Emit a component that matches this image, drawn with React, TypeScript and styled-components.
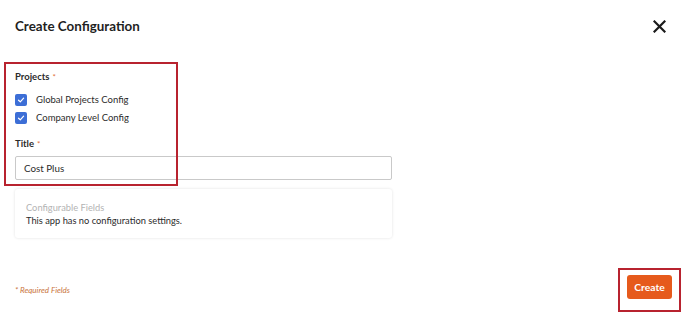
import React from 'react';
import styled, { createGlobalStyle } from 'styled-components';

const Global = createGlobalStyle`
  html, body { margin: 0; padding: 0; background: #fff; }
  body { font-family: Lato, "Open Sans", sans-serif; color: #2b2b2b; }
  * { box-sizing: border-box; }
`;

const Dialog = styled.div`
  position: relative;
  width: 688px;
  height: 319px;
  padding: 0 15px;
  display: flex;
  flex-direction: column;
`;

const Header = styled.header`
  height: 52px;
  display: flex;
  align-items: center;
  justify-content: space-between;
`;

const Heading = styled.h2`
  margin: 0;
  font-size: 13.4px;
  font-weight: 700;
  color: #1f1f1f;
`;

const CloseButton = styled.button`
  border: 0;
  background: none;
  padding: 0;
  margin-right: 7px;
  width: 13px;
  height: 13px;
  display: flex;
  cursor: pointer;
`;

const Form = styled.div`
  width: 377px;
  display: flex;
  flex-direction: column;
  padding-top: 18px;
`;

const Label = styled.div`
  font-size: 9.5px;
  font-weight: 700;
  color: #2b2b2b;
  line-height: 14px;
  span { color: #e2703a; font-weight: 400; margin-left: 3px; font-size: 8px; }
`;

const CheckList = styled.div`
  display: flex;
  flex-direction: column;
  gap: 6px;
  margin: 10px 0 13px;
`;

const CheckRow = styled.label`
  display: flex;
  align-items: center;
  gap: 9px;
  font-size: 9.5px;
  color: #2b2b2b;
  line-height: 12px;
`;

const Box = styled.span`
  width: 12px;
  height: 12px;
  border-radius: 2px;
  background: #3c6ed6;
  display: flex;
  align-items: center;
  justify-content: center;
`;

const Input = styled.div`
  margin-top: 5px;
  height: 24px;
  border: 1px solid #c9c9c9;
  border-radius: 2px;
  padding: 0 8px;
  display: flex;
  align-items: center;
  font-size: 9.8px;
  color: #2b2b2b;
`;

const Card = styled.div`
  margin-top: 9px;
  height: 49px;
  border-radius: 3px;
  box-shadow: 0 0 3px rgba(0, 0, 0, 0.12);
  padding: 12px 11px 0;
  display: flex;
  flex-direction: column;
  gap: 0;
  font-size: 9.3px;
  line-height: 13px;
`;

const Muted = styled.div`
  color: #b3b3b3;
`;

const Text = styled.div`
  color: #2b2b2b;
`;

const Footer = styled.footer`
  margin-top: auto;
  height: 60px;
  display: flex;
  align-items: center;
  justify-content: space-between;
  padding-bottom: 4px;
`;

const Required = styled.div`
  font-size: 8px;
  font-style: italic;
  color: #c9743c;
  padding-top: 6px;
`;

const CreateButton = styled.button`
  margin-right: 1px;
  width: 45px;
  height: 24px;
  border: 0;
  border-radius: 3px;
  background: #e65a1c;
  color: #fff;
  font-family: inherit;
  font-size: 10.3px;
  font-weight: 700;
  cursor: pointer;
`;

const Highlight = styled.div<{ $x: number; $y: number; $w: number; $h: number }>`
  position: absolute;
  left: ${p => p.$x}px;
  top: ${p => p.$y}px;
  width: ${p => p.$w}px;
  height: ${p => p.$h}px;
  border: 2px solid #b8232f;
  pointer-events: none;
`;

const Check = () => (
  <Box>
    <svg width="8" height="8" viewBox="0 0 8 8">
      <path d="M1.5 4.2 L3.3 5.8 L6.6 2.2" fill="none" stroke="#fff" strokeWidth="1.2" strokeLinecap="round" strokeLinejoin="round" />
    </svg>
  </Box>
);

export default function App() {
  return (
    <>
      <Global />
      <Dialog>
        <Header>
          <Heading>Create Configuration</Heading>
          <CloseButton aria-label="close">
            <svg width="13" height="13" viewBox="0 0 13 13">
              <path d="M1.5 1.5 L11.5 11.5 M11.5 1.5 L1.5 11.5" stroke="#1a1a1a" strokeWidth="2.2" strokeLinecap="square" />
            </svg>
          </CloseButton>
        </Header>
        <Form>
          <Label>Projects<span>*</span></Label>
          <CheckList>
            <CheckRow><Check />Global Projects Config</CheckRow>
            <CheckRow><Check />Company Level Config</CheckRow>
          </CheckList>
          <Label>Title<span>*</span></Label>
          <Input>Cost Plus</Input>
          <Card>
            <Muted>Configurable Fields</Muted>
            <Text>This app has no configuration settings.</Text>
          </Card>
        </Form>
        <Footer>
          <Required>* Required Fields</Required>
          <CreateButton>Create</CreateButton>
        </Footer>
        <Highlight $x={4} $y={62} $w={174} $h={124} />
        <Highlight $x={618} $y={268} $w={63} $h={44} />
      </Dialog>
    </>
  );
}
